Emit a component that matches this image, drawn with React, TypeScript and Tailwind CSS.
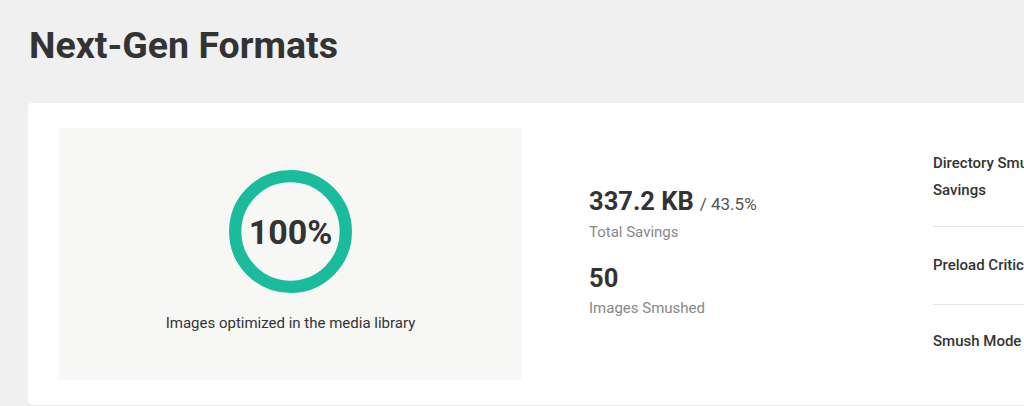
export default function App() {
  return (
    <div
      className="w-[1024px] h-[406px] overflow-hidden bg-[#f0f0f0] text-[#333333]"
      style={{ fontFamily: "Roboto, 'Noto Sans', sans-serif" }}
    >
      <div className="pl-[29px] pt-[21px] h-[103px]">
        <h1 className="text-[37.5px] leading-[48px] font-bold text-[#333333]">Next-Gen Formats</h1>
      </div>
      <div className="ml-[28px] w-[1100px] h-[302px] bg-white rounded-[4px] shadow-[0_2px_0_#e6e6e6] flex px-[31px] pt-[25px]">
        <div className="w-[463px] h-[252px] shrink-0 bg-[#f7f8f5] flex flex-col items-center pt-[42px]">
          <svg width="123" height="123" viewBox="0 0 123 123">
            <circle cx="61.5" cy="61.5" r="55.3" fill="none" stroke="#1abc9c" strokeWidth="12.3" />
            <text
              x="61.5"
              y="73.5"
              textAnchor="middle"
              fontSize="34"
              fontWeight="700"
              fill="#333333"
              fontFamily="Roboto, sans-serif"
            >
              100%
            </text>
          </svg>
          <p className="mt-[20px] text-[15px] leading-[20px] text-[#333333]">Images optimized in the media library</p>
        </div>
        <div className="w-[411px] shrink-0 pl-[67px] flex flex-col pt-[57px]">
          <div className="flex items-baseline">
            <span className="text-[25.5px] leading-[32px] font-bold text-[#333333]">337.2 KB</span>
            <span className="ml-[6px] text-[17px] leading-[22px] text-[#555555]">/ 43.5%</span>
          </div>
          <div className="mt-[5px] text-[15px] leading-[20px] text-[#888888]">Total Savings</div>
          <div className="mt-[20px] text-[25.5px] leading-[32px] font-bold text-[#333333]">50</div>
          <div className="mt-[4px] text-[15px] leading-[20px] text-[#888888]">Images Smushed</div>
        </div>
        <div className="flex-1 flex flex-col">
          <div className="py-[22px] border-b border-[#e6e6e6] flex">
            <span className="w-[140px] text-[15px] leading-[27px] font-medium text-[#333333]">Directory Smush Savings</span>
          </div>
          <div className="py-[25px] border-b border-[#e6e6e6] flex">
            <span className="w-[140px] text-[15px] leading-[27px] font-medium text-[#333333] whitespace-nowrap">Preload Critical Images</span>
          </div>
          <div className="py-[23px] flex">
            <span className="w-[140px] text-[15px] leading-[27px] font-medium text-[#333333]">Smush Mode</span>
          </div>
        </div>
      </div>
    </div>
  );
}
